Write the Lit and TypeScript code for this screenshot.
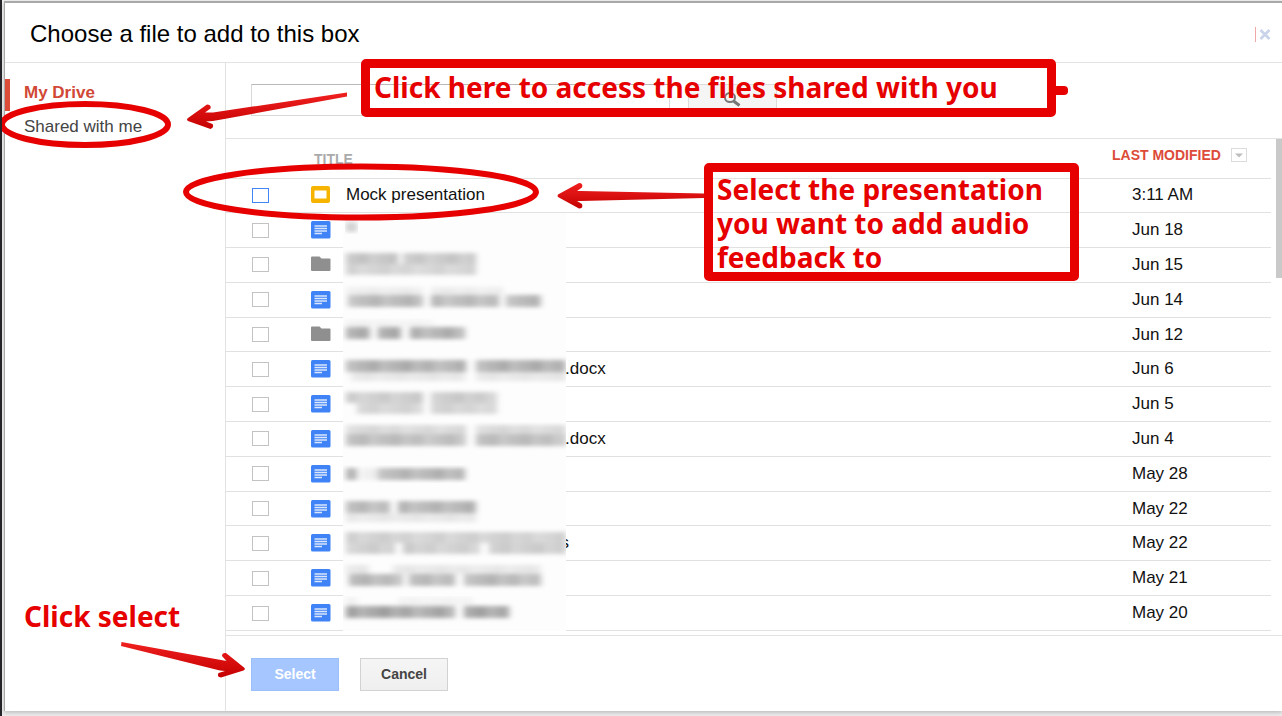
import { LitElement, html, css, svg } from "lit";
import { customElement, state } from "lit/decorators.js";

type Kind = "slides" | "doc" | "folder";

interface Band {
  top: number;
  height: number;
  tone: number;
  spans: [number, number][];
}

interface FileRow {
  kind: Kind;
  name: string;
  date: string;
  bands: Band[];
}

const band = (top: number, height: number, tone: number, ...spans: [number, number][]): Band => ({
  top,
  height,
  tone,
  spans,
});

const FILES: FileRow[] = [
  { kind: "slides", name: "Mock presentation", date: "3:11 AM", bands: [] },
  { kind: "doc", name: "", date: "Jun 18", bands: [band(9, 10, 0.15, [3, 14])] },
  {
    kind: "folder", name: "", date: "Jun 15",
    bands: [band(5, 11, 0.2, [3, 55], [60, 133]), band(16, 11, 0.15, [3, 133])],
  },
  {
    kind: "doc", name: "", date: "Jun 14",
    bands: [band(4, 8, 0.06, [3, 80], [88, 160]), band(12, 12, 0.25, [5, 80], [88, 156], [163, 198])],
  },
  {
    kind: "folder", name: "", date: "Jun 12",
    bands: [band(2, 6, 0.04, [3, 90]), band(9, 12, 0.29, [3, 27], [35, 58], [67, 122])],
  },
  {
    kind: "doc", name: ".docx", date: "Jun 6",
    bands: [band(8, 12, 0.28, [3, 123], [133, 223]), band(20, 9, 0.08, [8, 123], [133, 223])],
  },
  {
    kind: "doc", name: "", date: "Jun 5",
    bands: [band(5, 11, 0.18, [3, 80], [88, 154]), band(16, 11, 0.15, [14, 80], [88, 154])],
  },
  {
    kind: "doc", name: ".docx", date: "Jun 4",
    bands: [band(3, 9, 0.13, [3, 123], [133, 223]), band(12, 12, 0.23, [3, 123], [133, 223])],
  },
  {
    kind: "doc", name: "", date: "May 28",
    bands: [band(11, 12, 0.26, [3, 14], [35, 122]), band(11, 12, 0.06, [18, 35])],
  },
  {
    kind: "doc", name: "", date: "May 22",
    bands: [band(9, 12, 0.26, [3, 47], [55, 133]), band(21, 9, 0.08, [3, 133])],
  },
  {
    kind: "doc", name: "s", date: "May 22",
    bands: [band(6, 11, 0.16, [3, 223]), band(17, 11, 0.17, [3, 52], [60, 137], [146, 223])],
  },
  {
    kind: "doc", name: "", date: "May 21",
    bands: [band(4, 9, 0.08, [3, 26], [50, 198]), band(13, 12, 0.25, [6, 60], [66, 112], [121, 198])],
  },
  {
    kind: "doc", name: "", date: "May 20",
    bands: [band(1, 8, 0.04, [3, 14], [55, 130]), band(10, 12, 0.32, [3, 112], [121, 166])],
  },
];

@customElement("file-icon")
class FileIcon extends LitElement {
  static properties = { kind: {} };
  declare kind: Kind;

  static styles = css`
    :host { display: block; width: 20px; height: 18px; }
    .glyph { display: block; }
  `;

  render() {
    if (this.kind === "slides") {
      return html`<svg class="glyph" width="20" height="18" viewBox="0 0 20 18" aria-hidden="true">
        <rect width="19" height="17" rx="2" fill="#f6b400" />
        <rect x="3.5" y="4.500" width="12" height="8" fill="#fff" />
      </svg>`;
    }
    if (this.kind === "folder") {
      return html`<svg class="glyph" width="20" height="18" viewBox="0 0 20 18" aria-hidden="true">
        <path d="M0 1.5Q0 .5 1 .5H8.5L10.5 2.5H18.5Q19.5 2.5 19.5 3.5V14Q19.5 15 18.5 15H1Q0 15 0 14Z" fill="#8f8f8f" />
      </svg>`;
    }
    return html`<svg class="glyph" width="20" height="18" viewBox="0 0 20 18" aria-hidden="true">
      <rect width="19.5" height="17.5" rx="1.5" fill="#4083f7" />
      <path d="M3.5 5H16M3.5 7.5H16M3.5 10H16M3.5 12.5H11" stroke="#d9e6fd" stroke-width="1.3" />
    </svg>`;
  }
}

@customElement("redaction-mask")
class RedactionMask extends LitElement {
  static properties = { bands: { attribute: false }, seed: { type: Number } };
  declare bands: Band[];
  declare seed: number;

  static styles = css`
    :host { display: block; overflow: hidden; background: #fdfdfd; }
    .mosaic { display: block; }
  `;

  private cells() {
    const out = [];
    let n = this.seed * 7;
    for (const b of this.bands) {
      for (const [from, to] of b.spans) {
        for (let x = from; x < to; x += 11) {
          n += 1;
          const shade = b.tone * (0.85 + ((n * 37) % 11) / 30);
          out.push(svg`<rect x=${x} y=${b.top} width=${Math.min(11, to - x)} height=${b.height} fill="#000" fill-opacity=${shade.toFixed(3)} />`);
        }
      }
    }
    return out;
  }

  render() {
    return html`<svg class="mosaic" width="223" height="36" aria-hidden="true">
      <defs><filter id="soft" x="-5%" y="-20%" width="110%" height="140%"><feGaussianBlur stdDeviation="3 2" /></filter></defs>
      <g filter="url(#soft)">${this.cells()}</g>
    </svg>`;
  }
}

@customElement("app-root")
class AppRoot extends LitElement {
  @state() private section = "drive";

  static styles = css`
    :host {
      display: block;
      position: relative;
      box-sizing: border-box;
      min-height: 100vh;
      padding: 1px 0 5px 4px;
      overflow: hidden;
      background: linear-gradient(90deg, #26262a 2px, #eeeeee 2px);
      font-family: "Liberation Sans", Arial, sans-serif;
      font-size: 17px;
      line-height: 20px;
      color: #111;
      display: flex;
    }
    * { box-sizing: border-box; }

    .dialog {
      flex: 1;
      min-width: 0;
      display: flex;
      flex-direction: column;
      background: #fff;
      border-top: 2px solid #a9a9a9;
      border-left: 1px solid #a9a9a9;
      box-shadow: 0 2px 4px rgba(0, 0, 0, 0.2);
    }
    .header {
      display: flex;
      align-items: center;
      justify-content: space-between;
      height: 60px;
      padding: 3px 11px 0 25px;
      border-bottom: 1px solid #e3e3e3;
    }
    .heading { margin: 0; font-size: 24px; line-height: 28px; font-weight: 400; color: #000; }
    .close {
      display: flex;
      align-items: center;
      height: 15px;
      padding: 0 0 0 3px;
      border: 0;
      border-left: 1px solid #f0a7a7;
      background: none;
    }

    .body { flex: 1; display: flex; min-height: 0; }
    .sidebar {
      display: flex;
      flex-direction: column;
      gap: 2px;
      width: 221px;
      padding-top: 16px;
      border-right: 1px solid #e3e3e3;
    }
    .place {
      height: 32px;
      padding: 4px 0 0 14px;
      border-left: 5px solid transparent;
      color: #444;
      text-decoration: none;
    }
    .place.active { border-left-color: #dd4b39; color: #d14836; font-weight: 700; }

    .main { flex: 1; min-width: 0; display: flex; flex-direction: column; }
    .search { display: flex; gap: 18px; height: 76px; padding: 21px 25px 0; border-bottom: 1px solid #e3e3e3; }
    .query {
      width: 419px;
      height: 32px;
      padding: 0 8px;
      border: 1px solid #d9d9d9;
      border-top-color: #b9b9b9;
      font: inherit;
    }
    .go {
      display: flex;
      align-items: center;
      justify-content: center;
      width: 89px;
      height: 32px;
      padding: 0;
      border: 1px solid #dcdcdc;
      background: #f5f5f5;
    }

    .list { flex: 1; display: flex; justify-content: space-between; gap: 5px; padding-bottom: 4px; }
    .files { flex: 1; height: 100%; border-collapse: collapse; table-layout: fixed; }
    .col-check { width: 85px; }
    .col-icon { width: 35px; }
    .col-date { width: 159px; }
    .head { height: 39px; }
    .head th {
      padding: 0;
      border-bottom: 1px solid #e1e1e1;
      font-size: 14px;
      line-height: 16px;
      text-align: left;
      vertical-align: top;
    }
    .head .th-title { padding: 12px 0 0 3px; color: #aaa; }
    .head .th-date { padding-top: 8px; color: #dd4b39; }
    .sort { display: flex; align-items: center; gap: 10px; }
    .sort-btn { display: flex; padding: 0; border: 0; background: none; }
    .row { height: 34px; }
    .row td { padding: 0; border-bottom: 1px solid #e1e1e1; vertical-align: middle; }
    .row .cell-check { padding-left: 26px; }
    .row .cell-date { padding-left: 20px; }
    .cell-name { position: relative; }
    .check {
      display: block;
      appearance: none;
      width: 17px;
      height: 15px;
      margin: 0;
      border: 1px solid #c3c3c3;
      background: #fff;
    }
    .check.focused { border-color: #4285f4; }
    .suffix { display: block; width: 223px; text-align: right; }
    .suffix.extension { padding-left: 219px; text-align: left; }
    .mask { position: absolute; top: 0; bottom: -1px; left: -3px; width: 223px; }
    .thumb { width: 6px; height: 139px; background: #c9c9c9; }

    .footer {
      display: flex;
      gap: 21px;
      height: 76px;
      padding: 22px 25px 0;
      border-top: 1px solid #e3e3e3;
    }
    .btn {
      width: 88px;
      height: 33px;
      padding: 0 0 2px;
      border: 1px solid #d2d2d2;
      background: linear-gradient(#f5f5f5, #efefef);
      font: 700 14px/18px "Liberation Sans", Arial, sans-serif;
      color: #444;
    }
    .btn.primary { border-color: #9bbffa; background: #a5c6ff; color: #fff; }

    .notes { position: absolute; inset: 0; pointer-events: none; }
    .marks { position: absolute; inset: 0 0 0 2px; }
    .note {
      position: absolute;
      margin: 0;
      font: 700 28px/34px "Noto Sans", "Open Sans", sans-serif;
      color: #e60000;
      white-space: pre-line;
    }
    .note.boxed { border: 9px solid #e60000; border-radius: 5px; }
    .note.shared { top: 59px; left: 361px; width: 695px; height: 58px; padding: 2px 0 0 4px; }
    .note.pick { top: 163px; left: 704px; width: 375px; height: 118px; padding-left: 4px; }
    .note.choose { top: 599px; left: 24px; }
  `;

  private hiddenName(file: FileRow, i: number) {
    const cls = file.name.startsWith(".") ? "suffix extension" : "suffix";
    return html`<span class=${cls}>${file.name}</span>
      <redaction-mask class="mask" .bands=${file.bands} .seed=${i}></redaction-mask>`;
  }

  private row(file: FileRow, i: number) {
    return html`<tr class="row">
      <td class="cell-check">
        <input class=${i === 0 ? "check focused" : "check"} type="checkbox" aria-label=${file.name || `File ${i + 1}`} />
      </td>
      <td><file-icon .kind=${file.kind}></file-icon></td>
      <td class="cell-name">${i === 0 ? file.name : this.hiddenName(file, i)}</td>
      <td class="cell-date">${file.date}</td>
    </tr>`;
  }

  private place(id: string, label: string) {
    return html`<a class=${this.section === id ? "place active" : "place"} href="#${id}"
      @click=${() => (this.section = id)}>${label}</a>`;
  }

  render() {
    return html`
      <section class="dialog" role="dialog" aria-labelledby="heading">
        <header class="header">
          <h1 class="heading" id="heading">Choose a file to add to this box</h1>
          <button class="close" aria-label="Close">
            <svg width="12" height="11" viewBox="0 0 12 11"><path d="M1.5 1L10.5 10M10.5 1L1.5 10" stroke="#c9d3ea" stroke-width="2.6" /></svg>
          </button>
        </header>
        <div class="body">
          <nav class="sidebar">
            ${this.place("drive", "My Drive")} ${this.place("shared", "Shared with me")}
          </nav>
          <main class="main">
            <form class="search" role="search" @submit=${(e: Event) => e.preventDefault()}>
              <input class="query" type="text" aria-label="Search files" />
              <button class="go" aria-label="Search">
                <svg width="18" height="16" viewBox="1 0 18 16" fill="none" stroke="#777">
                  <ellipse cx="7" cy="5.5" rx="5" ry="4.5" stroke-width="2" />
                  <path d="M10.5 9L16.5 13.5" stroke-width="3" />
                </svg>
              </button>
            </form>
            <div class="list">
              <table class="files">
                <colgroup><col class="col-check" /><col class="col-icon" /><col /><col class="col-date" /></colgroup>
                <thead>
                  <tr class="head">
                    <th></th>
                    <th class="th-title" colspan="2">TITLE</th>
                    <th class="th-date">
                      <div class="sort">LAST MODIFIED
                        <button class="sort-btn" aria-label="Sort options">
                          <svg width="16" height="14" viewBox="0 0 16 14">
                            <rect x=".5" y=".5" width="15" height="13" fill="#fff" stroke="#dcdcdc" />
                            <path d="M4 5.5H12L8 9.5Z" fill="#bdbdbd" />
                          </svg>
                        </button>
                      </div>
                    </th>
                  </tr>
                </thead>
                <tbody>${FILES.map((f, i) => this.row(f, i))}</tbody>
              </table>
              <div class="thumb"></div>
            </div>
            <footer class="footer">
              <button class="btn primary">Select</button>
              <button class="btn">Cancel</button>
            </footer>
          </main>
        </div>
      </section>

      <div class="notes">
        <svg class="marks" width="100%" height="100%" aria-hidden="true">
          <defs>
            <linearGradient id="shaft" x1="0" y1="0" x2="0" y2="1">
              <stop offset="0" stop-color="#f02020" /><stop offset="1" stop-color="#c40000" />
            </linearGradient>
          </defs>
          <g transform="translate(-2 0)">
            <g fill="none" stroke="#e60000" stroke-width="6">
              <ellipse cx="85" cy="124.500" rx="83" ry="20.500" />
              <ellipse cx="361" cy="192" rx="175" ry="25.500" />
            </g>
            <g fill="url(#shaft)">
              <path d="M347 92.500L347 96.500L213 121L206 121.500L212.500 124Q214.500 127.500 210.500 129L188 121Q186 119.500 188 118L207 104.500Q211.500 104.500 210.500 108.500L205 112.500L213 112.500Z" />
              <path d="M704 193.500L704 198L581 201L577 201L582 204Q583.500 208.500 579 208.500L558 197Q557 195.500 558 194.500L579 183Q583.500 183 582 187.500L577 191L581 191Z" />
              <path d="M121.500 642L121 646L220 670.500L225 671L218.500 673Q216.500 677 221 677.500L243.500 670.500Q246 669 244 667.500L226 653Q222 652.500 222 656L226.500 661L221 660Z" />
            </g>
            <rect x="1052" y="86" width="16" height="9" rx="4" fill="#e60000" />
          </g>
        </svg>
        <p class="note boxed shared">Click here to access the files shared with you</p>
        <p class="note boxed pick">${"Select the presentation\nyou want to add audio\nfeedback to"}</p>
        <p class="note choose">Click select</p>
      </div>
    `;
  }
}
